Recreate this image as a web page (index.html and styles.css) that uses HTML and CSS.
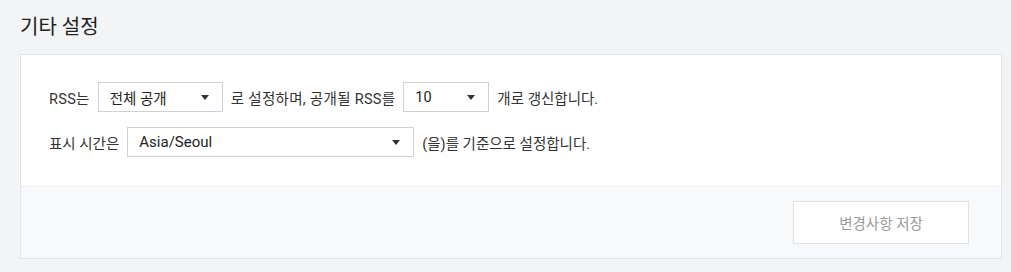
FILE: index.html
```html
<!DOCTYPE html>
<html lang="ko">
<head>
<meta charset="utf-8">
<link rel="stylesheet" href="styles.css">
</head>
<body>
<h2 class="title">기타 설정</h2>
<div class="card">
  <div class="card-body">
    <div class="row">
      <span class="lead">RSS는</span>
      <div class="select w-open"><span>전체 공개</span><i class="arrow"></i></div>
      <span class="wide">로 설정하며, 공개될 RSS를</span>
      <div class="select w-count"><span>10</span><i class="arrow"></i></div>
      <span>개로 갱신합니다.</span>
    </div>
    <div class="row">
      <span>표시 시간은</span>
      <div class="select w-tz"><span class="latin">Asia/Seoul</span><i class="arrow"></i></div>
      <span>(을)를 기준으로 설정합니다.</span>
    </div>
  </div>
  <div class="card-foot">
    <button class="save">변경사항 저장</button>
  </div>
</div>
</body>
</html>
```
FILE: styles.css
```css
html, body {
  margin: 0;
  padding: 0;
  background: #f3f4f6;
  font-family: Roboto, "Noto Sans CJK KR", sans-serif;
  color: #333;
}
body {
  padding: 0 9px 13px 20px;
}
.title {
  margin: 0;
  padding-top: 13px;
  height: 54px;
  box-sizing: border-box;
  font-size: 20px;
  font-weight: 400;
  color: #222;
  line-height: 28px;
}
.card {
  border: 1px solid #e0e3ea;
  background: #fff;
}
.card-body {
  padding: 27px 28px 29px;
  display: flex;
  flex-direction: column;
  gap: 15px;
}
.row {
  display: flex;
  align-items: center;
  gap: 8px;
  font-size: 14.5px;
  height: 30px;
}
.lead {
  letter-spacing: 0.3px;
}
.wide {
  letter-spacing: 0.3px;
}
.select {
  height: 30px;
  box-sizing: border-box;
  border: 1px solid #ccd2db;
  background: #fff;
  display: flex;
  align-items: center;
  justify-content: space-between;
  padding: 0 13px 0 11px;
  font-size: 14.5px;
  color: #222;
}
.latin {
  font-size: 15px;
}
.w-open { width: 125px; }
.w-count { width: 86px; }
.w-tz { width: 287px; }
.arrow {
  width: 0;
  height: 0;
  border-left: 4px solid transparent;
  border-right: 4px solid transparent;
  border-top: 5px solid #333;
}
.card-foot {
  border-top: 1px solid #eceef2;
  background: #f8f9fb;
  display: flex;
  justify-content: flex-end;
  padding: 14px 32px 14px;
}
.save {
  width: 176px;
  height: 43px;
  background: #fff;
  border: 1px solid #dde1e8;
  font-family: Roboto, "Noto Sans CJK KR", sans-serif;
  font-size: 14.5px;
  color: #999;
}
```
